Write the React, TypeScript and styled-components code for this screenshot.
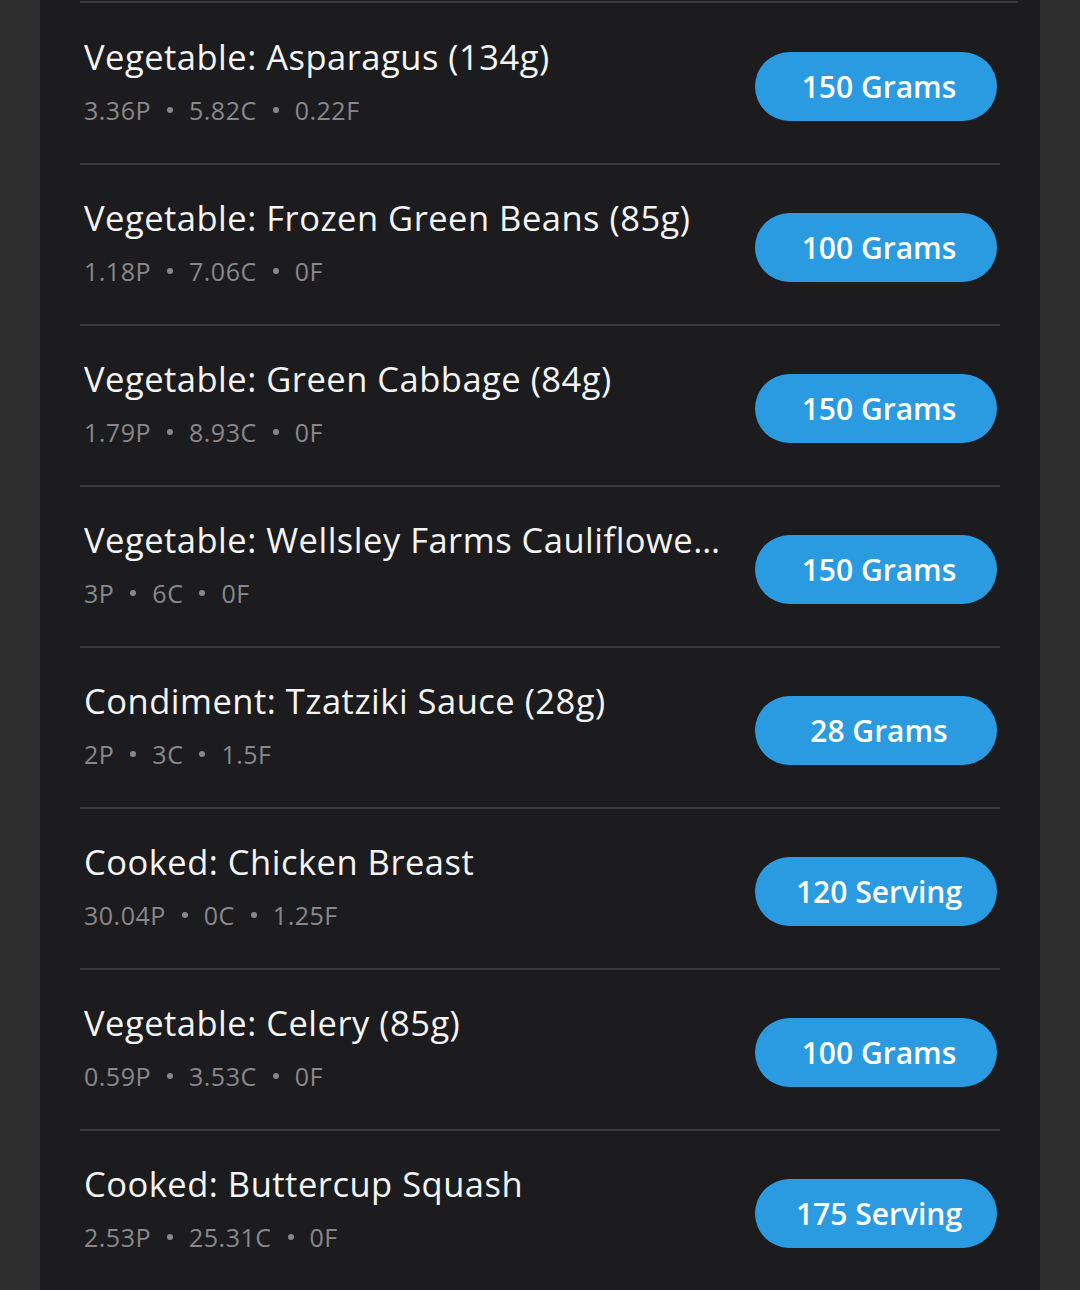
import React from "react";
import styled, { createGlobalStyle } from "styled-components";

const Global = createGlobalStyle`
  html, body { margin: 0; padding: 0; background: #2d2d2e; }
  body { font-family: "Open Sans", "Liberation Sans", sans-serif; }
`;

const Page = styled.div`
  width: 1080px;
  min-height: 1290px;
  background: #2d2d2e;
  display: flex;
  justify-content: center;
`;

const Panel = styled.div`
  width: 1000px;
  background: #1c1c1e;
  padding: 1px 40px 0 40px;
  box-sizing: border-box;
  min-height: 1290px;
`;

const TopRule = styled.div`
  height: 2px;
  width: 938px;
  background: #3a3a3c;
`;

const Row = styled.div<{ $first?: boolean }>`
  height: ${(p) => (p.$first ? "160px" : "161px")};
  box-sizing: border-box;
  border-top: ${(p) => (p.$first ? "none" : "2px solid #3a3a3c")};
  display: flex;
  align-items: center;
  justify-content: space-between;
  padding: 0 3px 0 4px;
`;

const Info = styled.div`
  display: flex;
  flex-direction: column;
  min-width: 0;
  flex: 1;
  padding-right: 30px;
  margin-bottom: 9px;
`;

const Title = styled.div`
  color: #f4f4f4;
  font-size: 34.5px;
  letter-spacing: 0.5px;
  line-height: 46px;
  white-space: nowrap;
  overflow: hidden;
  text-overflow: ellipsis;
`;

const Macros = styled.div`
  margin-top: 16px;
  color: #88888a;
  font-size: 25px;
  letter-spacing: 0.5px;
  line-height: 28px;
  display: flex;
  align-items: center;
`;

const Dot = styled.span`
  display: inline-block;
  width: 6px;
  height: 6px;
  border-radius: 50%;
  background: #88888a;
  margin: 0 16px;
`;

const Pill = styled.button`
  flex: none;
  margin-top: 6px;
  width: 242px;
  height: 69px;
  border: none;
  border-radius: 35px;
  background: #2a9be0;
  color: #ffffff;
  font-family: "Open Sans", "Liberation Sans", sans-serif;
  font-weight: 600;
  font-size: 30px;
  display: flex;
  align-items: center;
  justify-content: center;
  padding: 0 0 0 6px;
`;

type Item = { name: string; p: string; c: string; f: string; qty: string };

const items: Item[] = [
  { name: "Vegetable: Asparagus (134g)", p: "3.36P", c: "5.82C", f: "0.22F", qty: "150 Grams" },
  { name: "Vegetable: Frozen Green Beans (85g)", p: "1.18P", c: "7.06C", f: "0F", qty: "100 Grams" },
  { name: "Vegetable: Green Cabbage (84g)", p: "1.79P", c: "8.93C", f: "0F", qty: "150 Grams" },
  { name: "Vegetable: Wellsley Farms Cauliflower Rice (85g)", p: "3P", c: "6C", f: "0F", qty: "150 Grams" },
  { name: "Condiment: Tzatziki Sauce (28g)", p: "2P", c: "3C", f: "1.5F", qty: "28 Grams" },
  { name: "Cooked: Chicken Breast", p: "30.04P", c: "0C", f: "1.25F", qty: "120 Serving" },
  { name: "Vegetable: Celery (85g)", p: "0.59P", c: "3.53C", f: "0F", qty: "100 Grams" },
  { name: "Cooked: Buttercup Squash", p: "2.53P", c: "25.31C", f: "0F", qty: "175 Serving" },
];

export default function App() {
  return (
    <>
      <Global />
      <Page>
        <Panel>
          <TopRule />
          {items.map((it, i) => (
            <Row key={i} $first={i === 0}>
              <Info>
                <Title>{it.name}</Title>
                <Macros>
                  <span>{it.p}</span>
                  <Dot />
                  <span>{it.c}</span>
                  <Dot />
                  <span>{it.f}</span>
                </Macros>
              </Info>
              <Pill>{it.qty}</Pill>
            </Row>
          ))}
        </Panel>
      </Page>
    </>
  );
}
